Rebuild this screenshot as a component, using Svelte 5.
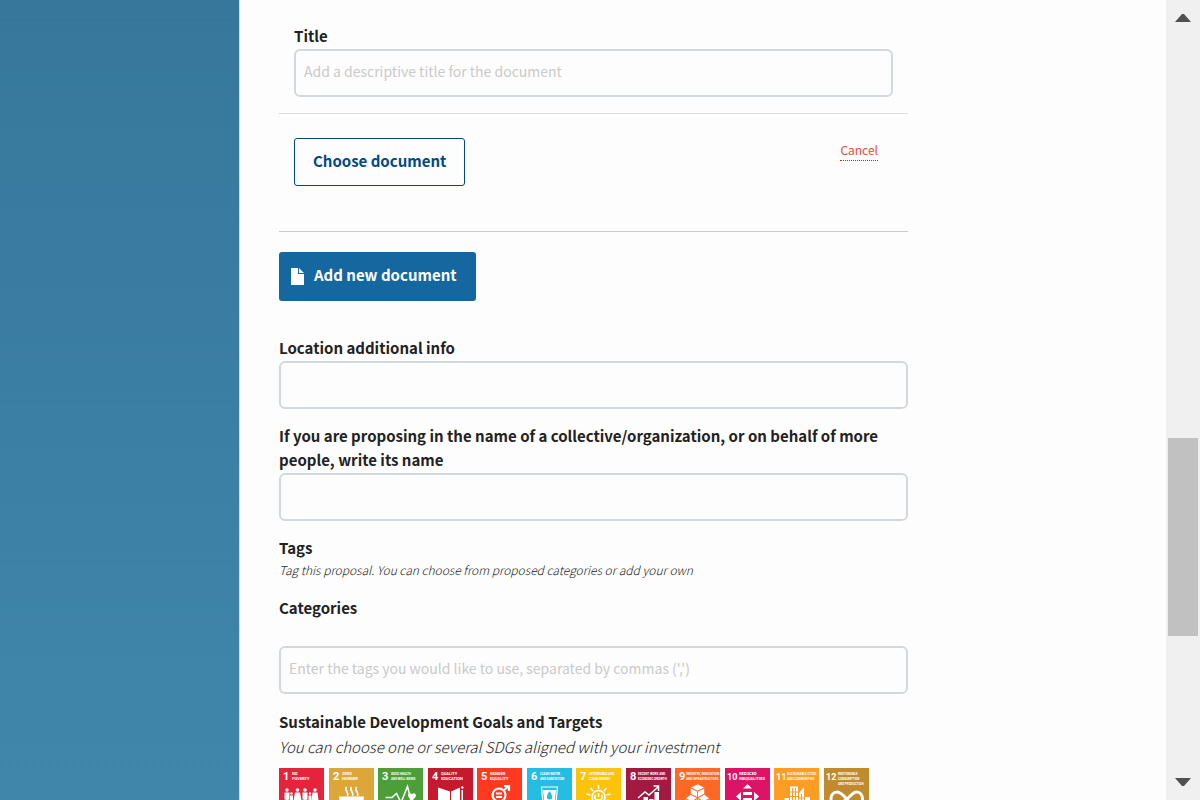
<script>
  let title = $state('');
  let location = $state('');
  let organization = $state('');
  let tags = $state('');

  const goals = [
    { n: 1, color: '#e5243b', x: 13, size: 4, lines: ['NO', 'POVERTY'] },
    { n: 2, color: '#dda63a', x: 13, size: 4, lines: ['ZERO', 'HUNGER'] },
    { n: 3, color: '#4c9f38', x: 13, size: 3, lines: ['GOOD HEALTH', 'AND WELL-BEING'] },
    { n: 4, color: '#c5192d', x: 13, size: 4, lines: ['QUALITY', 'EDUCATION'] },
    { n: 5, color: '#ff3a21', x: 13, size: 4, lines: ['GENDER', 'EQUALITY'] },
    { n: 6, color: '#26bde2', x: 13, size: 3, lines: ['CLEAN WATER', 'AND SANITATION'] },
    { n: 7, color: '#fcc30b', x: 13, size: 3, lines: ['AFFORDABLE AND', 'CLEAN ENERGY'] },
    { n: 8, color: '#a21942', x: 12, size: 3, lines: ['DECENT WORK AND', 'ECONOMIC GROWTH'] },
    { n: 9, color: '#fd6925', x: 11, size: 3, lines: ['INDUSTRY, INNOVATION', 'AND INFRASTRUCTURE'] },
    { n: 10, color: '#dd1367', x: 14, size: 4, lines: ['REDUCED', 'INEQUALITIES'] },
    { n: 11, color: '#fd9d24', x: 13, size: 3, lines: ['SUSTAINABLE CITIES', 'AND COMMUNITIES'] },
    { n: 12, color: '#bf8b2e', x: 14, size: 3, lines: ['RESPONSIBLE', 'CONSUMPTION', 'AND PRODUCTION'] }
  ];
</script>

<div class="page">
  <aside class="side"></aside>

  <main class="main">
    <form class="form" onsubmit={(e) => e.preventDefault()}>
      <div class="inset">
        <label for="doc-title">Title</label>
        <input id="doc-title" type="text" placeholder="Add a descriptive title for the document" bind:value={title} />
      </div>
      <div class="actions">
        <button type="button" class="outline">Choose document</button>
        <a href="#cancel" class="cancel">Cancel</a>
      </div>
      <button type="button" class="solid">
        <svg width="13" height="17" viewBox="0 0 13 17" aria-hidden="true">
          <path d="M0 0H7V6H13V17H0Z M8 0L13 5H8Z" fill="#fff" />
        </svg>
        <span>Add new document</span>
      </button>

      <div class="field">
        <label for="location">Location additional info</label>
        <input id="location" type="text" bind:value={location} />
      </div>
      <div class="field">
        <label for="organization">If you are proposing in the name of a collective/organization, or on behalf of more people, write its name</label>
        <input id="organization" type="text" bind:value={organization} />
      </div>
      <div class="field">
        <label for="tags">Tags</label>
        <p class="hint">Tag this proposal. You can choose from proposed categories or add your own</p>
      </div>
      <div class="field categories">
        <h2>Categories</h2>
        <input id="tags" type="text" placeholder="Enter the tags you would like to use, separated by commas (',')" bind:value={tags} />
      </div>
      <section class="field">
        <h2>Sustainable Development Goals and Targets</h2>
        <p class="lead">You can choose one or several SDGs aligned with your investment</p>
        <div class="goals">
          {#each goals as goal}
            <svg class="goal" width="45" height="45" viewBox="0 0 45 45" role="img" aria-label={goal.lines.join(' ')}>
              <rect width="45" height="45" fill={goal.color} />
              <text class="num" class:wide={goal.n > 9} x={goal.n > 9 ? 2 : 4} y="12">{goal.n}</text>
              {#each goal.lines as line, i}
                <text class="cap" class:short={goal.size === 4} x={goal.x} y={7 + i * 5}>{line}</text>
              {/each}
              {#if goal.n === 1}
                <g fill="#fff">
                  <circle cx="8" cy="22" r="1.7" /><path d="M5.5 24.5h5v7h-1v9h-3v-9h-1z" />
                  <circle cx="12.5" cy="25.5" r="1.2" /><path d="M11 27.5h3v5h-3z" />
                  <circle cx="18.5" cy="22" r="1.8" /><path d="M16 24.5h5l1.5 8h-8z" />
                  <circle cx="26" cy="22" r="1.8" /><path d="M23.5 24.5h5v7h-1v9h-3v-9h-1z" />
                  <circle cx="31" cy="25.5" r="1.2" /><path d="M29.5 27.5h3v5h-3z" />
                  <circle cx="36" cy="22" r="1.8" /><path d="M33.5 24.5h5l1 8h-7z" />
                </g>
              {:else if goal.n === 2}
                <g fill="none" stroke="#fff" stroke-width="1.6">
                  <path d="M17.5 19c-3 3 3 5 1 9M22.500 19c-3 3 3 5 1 9M27.500 19c-3 3 3 5 1 9" />
                </g>
                <path d="M10 28.500h25c0 6-4 10-8 11h-9c-4-1-8-5-8-11z" fill="#fff" />
              {:else if goal.n === 3}
                <path d="M7.5 29.500h6.500l4.500-4 4.500 9 6.500-16 3.500 14" fill="none" stroke="#fff" stroke-width="1.5" />
                <path d="M34 33l-3.500-4c-1.500-3 2-5 3.500-2.500 1.500-2.500 5-.5 3.500 2.500z" fill="#fff" />
              {:else if goal.n === 4}
                <path d="M10 19.500l12 4v17l-12-4zM23 23.500l9-4v17l-9 4zM33.500 22h1.500v13h-1.500z" fill="#fff" />
                <circle cx="34.300" cy="19.500" r="1.200" fill="#fff" />
              {:else if goal.n === 5}
                <g fill="none" stroke="#fff" stroke-width="2.2">
                  <circle cx="22" cy="27" r="6.500" />
                  <path d="M27 22l5-4M27 18h5v5M19 25.500h6M19 29h6M22 34v8" />
                </g>
              {:else if goal.n === 6}
                <path d="M14.5 19h16l-2 21h-12z" fill="none" stroke="#fff" stroke-width="1.200" />
                <path d="M16 22h13l-2 18H18z" fill="#fff" />
                <path d="M22.500 23c3.500 5 3.500 8.500 0 8.500s-3.500-3.500 0-8.500z" fill={goal.color} />
              {:else if goal.n === 7}
                <g fill="none" stroke="#fff" stroke-width="1.600">
                  <circle cx="22.500" cy="29" r="6.500" />
                  <path d="M22.500 17v4M14.500 20l2.500 3M30.500 20L28 23M10.500 26l4 1M34.500 26l-4 1M11 33l3-1M34 33l-3-1" />
                  <path d="M22.500 25v4M19.500 27c-2 3 0 5 3 5s5-2 3-5" />
                </g>
              {:else if goal.n === 8}
                <path d="M12 33h4.500v8H12zM17.500 29H22v12h-4.500zM23 31h4.500v10H23zM28.500 24H33v17h-4.500z" fill="#fff" />
                <path d="M12 30l7-6 4 3 9-8M27.500 18h5v5" fill="none" stroke="#fff" stroke-width="1.500" />
              {:else if goal.n === 9}
                <g fill="#fff" stroke={goal.color} stroke-width=".6">
                  <path d="M22.500 16l7 3.500-7 3.500-7-3.500zM15.500 20l7 3.500v6l-7-3.500zM29.500 20l-7 3.500v6l7-3.500z" />
                  <path d="M15.500 26.500l7 3.500-6 3.500-6-3zM29.500 26.500l-7 3.500 6 3.500 6-3zM10 31l6.500 3v7L10 38zM22.500 30.500v7l-6 3.500v-7zM22.500 30.500l6 3.500v7l-6-3.500zM34.500 31L28.500 34v7l6-3z" />
                </g>
              {:else if goal.n === 10}
                <path d="M22.500 16l4.500 4.500h-9zM11 28.500l5-4.500v9zM34 28.500l-5-4.500v9zM18 24h9v3h-9zM18 30h9v3h-9zM22.500 41l4.500-4.500h-9z" fill="#fff" />
              {:else if goal.n === 11}
                <path d="M16 18.500h8V40h-8zM10.500 30H15v10h-4.500zM25 25l5-6v21h-5zM31 29h5v11h-5z" fill="#fff" />
                <path d="M18.500 20v13M21.500 20v13M27.500 26v9M16 24h8M16 28.500h8M25 30h5" stroke={goal.color} />
              {:else}
                <path d="M22.500 31c-4-5-7-7-9.500-7-8 0-8 14 0 14 5 0 8-7 9.500-7s6-7 10-7c8 0 8 14 0 14-4 0-7-4-10-7z" fill="none" stroke="#fff" stroke-width="3" />
              {/if}
            </svg>
          {/each}
        </div>
      </section>
    </form>
  </main>

  <div class="scrollbar" aria-hidden="true">
    <svg width="16" height="8" viewBox="0 0 16 8"><path d="M0 8L7 0h2l7 8z" fill="#505050" /></svg>
    <div class="track"><div class="thumb"></div></div>
    <svg width="16" height="8" viewBox="0 0 16 8"><path d="M0 0L7 8h2l7-8z" fill="#505050" /></svg>
  </div>
</div>

<style>
  :global(body) {
    background: #fdfdfd;
  }
  .page {
    display: flex;
    height: 100vh;
    overflow: hidden;
    box-sizing: border-box;
    font-family: 'Noto Sans CJK JP', 'Noto Sans CJK SC', sans-serif;
    font-size: 15px;
    line-height: 24px;
    color: #222;
  }
  .page * {
    box-sizing: border-box;
  }
  .side {
    flex: 0 0 20%;
    background: linear-gradient(#37779c, #4086ab);
    border-right: 1px solid #d3dbe1;
  }
  .main {
    flex: 1;
    min-width: 0;
    padding: 24px 39px 0;
  }
  .form {
    max-width: 629px;
  }
  .inset {
    padding: 0 15px 16px;
    border-bottom: 1px solid #dee0e3;
  }
  label,
  h2 {
    display: block;
    margin: 0;
    font-size: 15px;
    line-height: 24px;
    font-weight: 700;
  }
  input {
    display: block;
    width: 100%;
    height: 48px;
    margin: 1px 0 0;
    padding: 0 8px 4px;
    border: 2px solid #d3d8dd;
    border-radius: 6px;
    background: transparent;
    font: inherit;
    font-size: 14px;
    color: #222;
  }
  input::placeholder {
    color: #cacaca;
    opacity: 1;
  }
  .actions {
    display: flex;
    justify-content: space-between;
    align-items: flex-start;
    padding: 24px 30px 45px 15px;
    border-bottom: 1px solid #c8cbce;
  }
  button {
    font: inherit;
    font-weight: 700;
    border-radius: 3px;
    cursor: pointer;
  }
  .outline {
    height: 48px;
    padding: 0 18px 2px;
    border: 1px solid #004a83;
    background: transparent;
    color: #004a83;
  }
  .cancel {
    margin-top: 3px;
    padding-bottom: 1px;
    border-bottom: 1px dotted #cf2a0e;
    color: #ec4a36;
    font-size: 12px;
    line-height: 18px;
    text-decoration: none;
  }
  .solid {
    display: flex;
    align-items: center;
    gap: 10px;
    height: 49px;
    margin: 20px 0 35px;
    padding: 0 19px 0 12px;
    border: 0;
    background: #14679f;
    color: #fff;
  }
  .solid span {
    padding-bottom: 4px;
  }
  .field {
    margin-bottom: 15px;
  }
  .hint,
  .lead {
    margin: 0;
    font-style: italic;
    font-weight: 300;
  }
  .hint {
    margin-bottom: 16px;
    font-size: 12px;
    line-height: 20px;
  }
  .lead {
    font-size: 15px;
    line-height: 26px;
  }
  .categories {
    margin-bottom: 16px;
  }
  .categories input {
    margin-top: 26px;
  }
  .goals {
    display: flex;
    justify-content: space-between;
    max-width: 590px;
    margin-top: 8px;
  }
  .goal {
    display: block;
  }
  .num,
  .cap {
    fill: #fff;
    font-family: 'Liberation Sans Narrow', Roboto, sans-serif;
    font-weight: 700;
  }
  .num {
    font-size: 11px;
  }
  .num.wide {
    font-size: 9px;
  }
  .cap {
    font-size: 3px;
  }
  .cap.short {
    font-size: 4px;
  }
  .scrollbar {
    flex: 0 0 34px;
    display: flex;
    flex-direction: column;
    align-items: center;
    gap: 12px;
    padding: 14px 1px 14px 0;
    background: #f0f0f0;
  }
  .track {
    flex: 1;
    width: 30px;
    display: flex;
    flex-direction: column;
    padding-top: 404px;
  }
  .thumb {
    height: 198px;
    background: #c1c1c1;
  }
</style>
